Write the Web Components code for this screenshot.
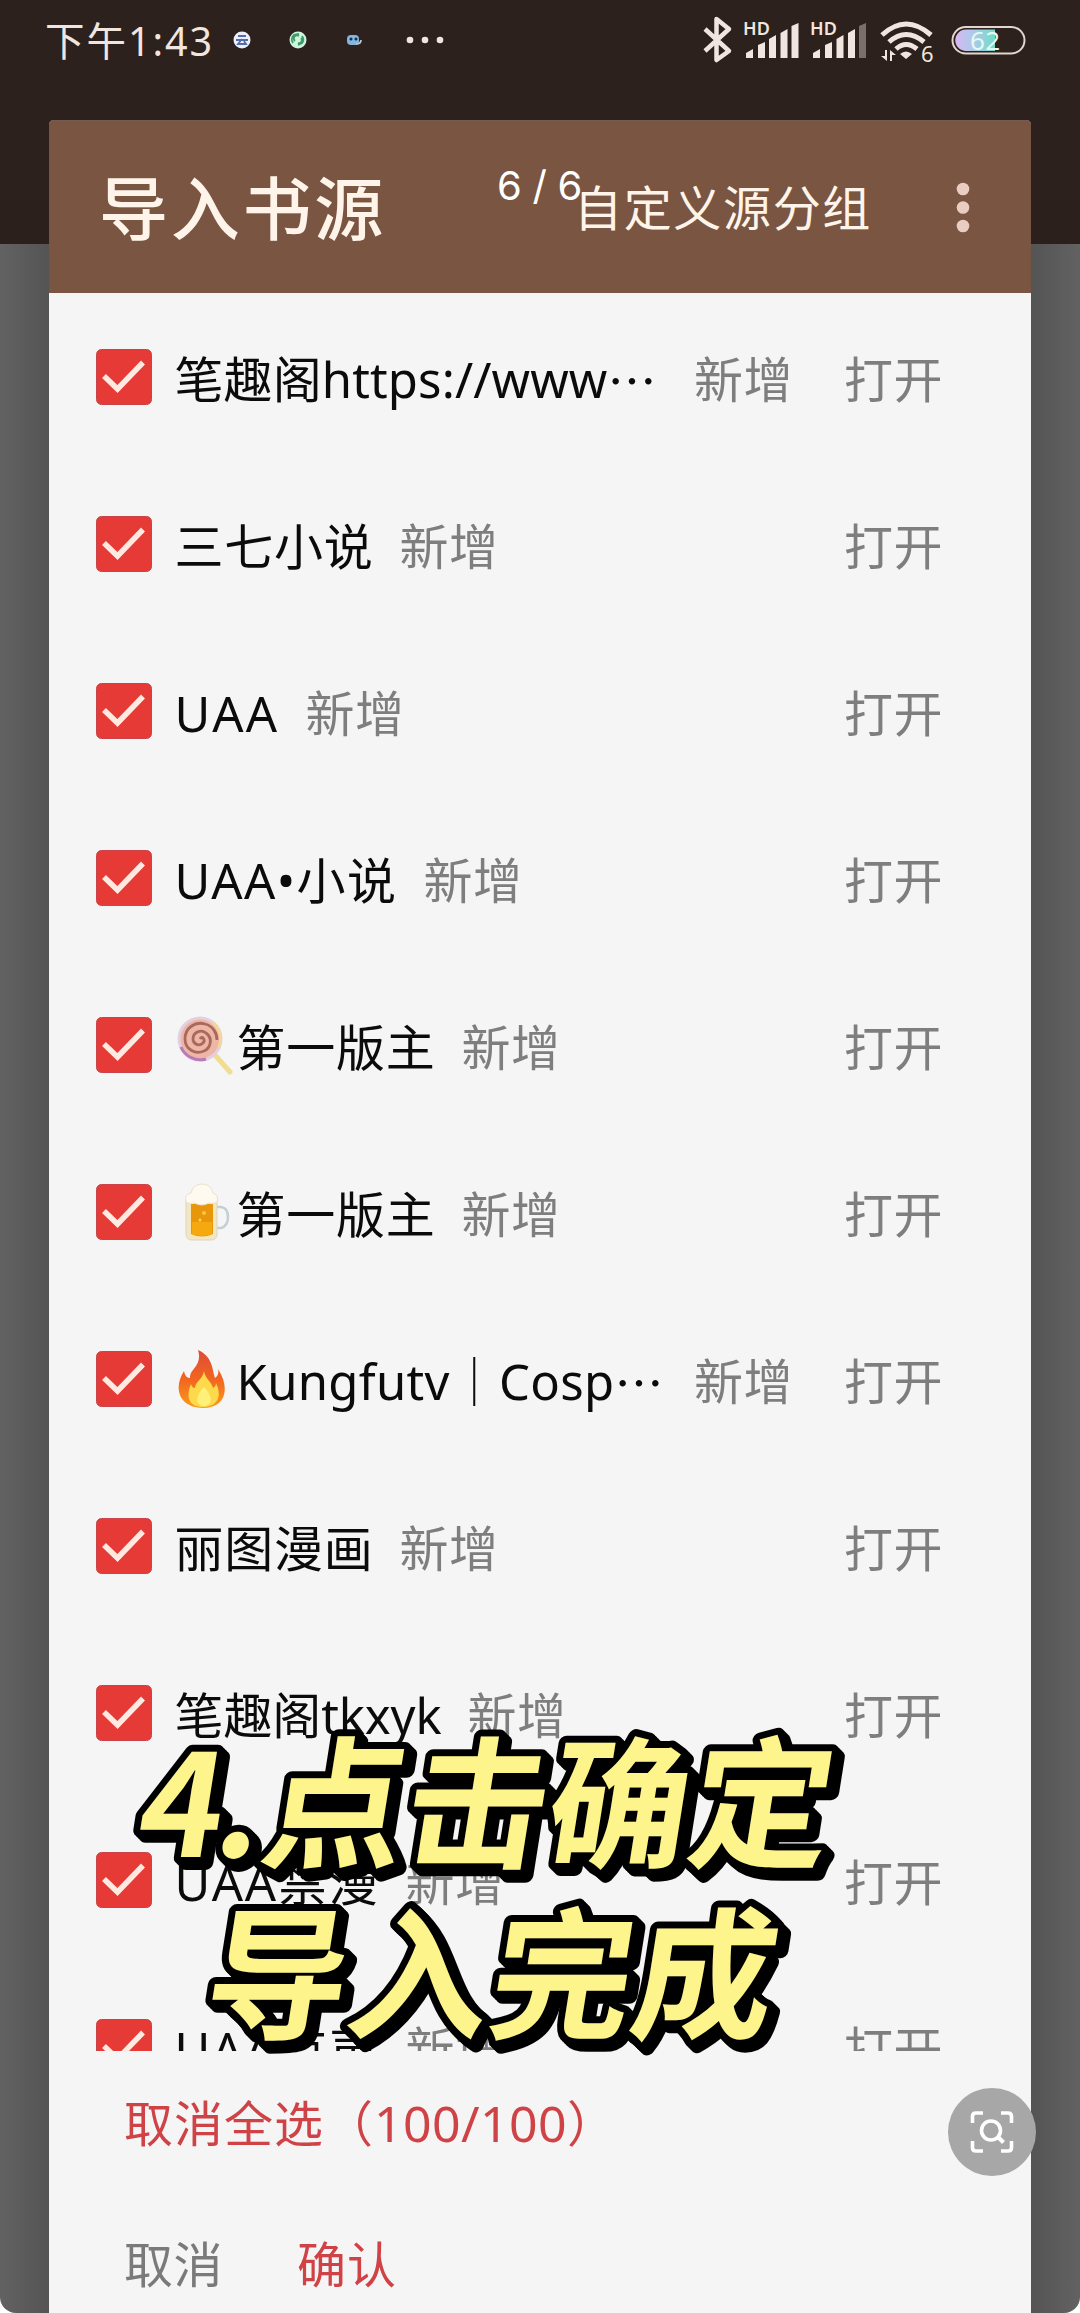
<!DOCTYPE html>
<html lang="zh-CN">
<head>
<meta charset="utf-8">
<title>导入书源</title>
<style>
html,body{margin:0;padding:0;background:#fff}
body{font-family:"Noto Sans","Noto Sans CJK SC",sans-serif}
</style>
</head>
<body>
<import-screen></import-screen>
<script>
const define=(name,html,setup)=>customElements.define(name,class extends HTMLElement{
  connectedCallback(){
    if(this.shadowRoot)return;
    this.attachShadow({mode:'open'}).innerHTML=typeof html==='function'?html(this):html;
    if(setup)setup(this);
  }
});

/* Text stretched to a given width through letter spacing. */
define('fit-text','<style>:host{display:inline-block;white-space:nowrap}span{display:inline-block;white-space:nowrap}</style><span><slot></slot></span>',el=>{
  const w=+el.getAttribute('w'),s=el.shadowRoot.querySelector('span');
  const n=[...el.textContent].length;
  s.style.letterSpacing=((w-s.getBoundingClientRect().width)/n)+'px';
  el.style.width=w+'px';
});

define('check-box',`<style>:host{display:block;width:56px;height:56px;flex:none}svg{display:block}</style>
<svg width="56" height="56" viewBox="0 0 56 56"><rect x=".5" y=".5" width="55" height="55" rx="5" fill="#e53a35" stroke="#c9444a"/><path d="M8 27 21.500 40 47 13.500" fill="none" stroke="#ffe9e0" stroke-width="5.500"/></svg>`);

const emoji={
lolly:`<svg width="56" height="60" viewBox="0 0 56 60"><path d="M38 40 53 57" stroke="#f1dc93" stroke-width="5" stroke-linecap="round"/><circle cx="23" cy="24" r="21" fill="#eeb7a5" stroke="#e4cfe0" stroke-width="3"/><path d="M4 32a21 21 0 0 0 25 12" fill="none" stroke="#b87bb8" stroke-width="3"/><path d="M35 7a21 21 0 0 1 7 25" fill="none" stroke="#f3d69a" stroke-width="3"/><path d="M23 24c2-4 6 1 3 4-4 4-10 1-10-4 0-7 8-10 13-6 7 5 5 15-2 18-9 4-19-2-19-12C8 13 18 6 28 9c8 2 12 9 12 16" fill="none" stroke="#a9695f" stroke-width="2.800"/></svg>`,
beer:`<svg width="56" height="60" viewBox="0 0 56 60"><path d="M38 25h6q7 1 7 10t-7 11h-6" fill="none" stroke="#c5ced2" stroke-width="2.500"/><path d="M9 16h31v36q0 6-6 6H15q-6 0-6-6z" fill="#f4e6bd" stroke="#d9d5c8"/><path d="M14 22h22v30q-11 5-22 0z" fill="#e8970d"/><path d="M15 40h20v12q-10 4-20 0z" fill="#f5a90e"/><circle cx="27" cy="31" r="2" fill="#ffc63b"/><circle cx="23" cy="38" r="1.500" fill="#ffd45c"/><path d="M9 20q-2-8 5-9 2-9 11-9 9 0 11 9 6 2 4 9-4 3-8 1-8 4-14 0-5 2-9-1z" fill="#fffaf0" stroke="#e9e2d2"/></svg>`,
fire:`<svg width="56" height="60" viewBox="0 0 56 60"><defs><linearGradient id="f" x2="0" y2="1"><stop offset="0" stop-color="#df4a38"/><stop offset=".5" stop-color="#f2651f"/><stop offset="1" stop-color="#fb9b1c"/></linearGradient></defs><path d="M21 1C36 8 35 20 38 29c3-2 4-5 3-9 13 20 7 39-15 39S-5 41 7 22c1 5 3 7 6 7-1-9 13-12 8-28z" fill="url(#f)"/><path d="M27 22c1 8 8 11 9 17 2-1 3-3 3-5 7 15 0 24-13 24S8 49 14 35c1 3 2 4 4 4 0-6 8-9 9-17z" fill="#fdd94c"/><path d="M27 38c8 8 10 18 0 19-10-1-8-11 0-19z" fill="#fff07a"/></svg>`
};

define('source-row',el=>{
  const e=el.getAttribute('emoji'),w=el.getAttribute('w'),dots=el.hasAttribute('cut');
  return `<style>
:host{display:flex;align-items:center;height:167px;flex:none;padding-left:46.500px;font-size:49px;line-height:60px;color:#0b0b0b}
check-box{margin-right:23px}
.main{display:flex;align-items:center;width:669.500px;height:60px;padding-top:4px}
.main svg{display:block;margin:-4px 4px 0 2px;flex:none}
.cut{font-family:"Noto Sans CJK SC",sans-serif;width:49px;font-size:49px}
.tag{margin-left:26px;color:#7e7e7e}
.tag.far{margin-left:auto;margin-right:51px}
.open{color:#7e7e7e;padding-top:4px}
</style><check-box></check-box><div class="main">${e?emoji[e]:''}<fit-text w="${w}">${el.getAttribute('name')}</fit-text>${dots?'<span class="cut">…</span>':''}<fit-text class="tag ${dots?'far':''}" w="99">新增</fit-text></div><fit-text class="open" w="99">打开</fit-text>`;
});

define('status-bar',`<style>
:host{display:flex;align-items:center;height:80px;color:#f1e6df;padding-left:45px;box-sizing:border-box}
svg{display:block;flex:none}
.time{font-size:39.500px;line-height:50px;margin-top:1px}
.apps{margin-left:19px}
.sys{margin-left:auto;margin-right:45px}
text{font-family:"Noto Sans",sans-serif}
</style>
<fit-text class="time" w="169">下午1:43</fit-text>
<svg class="apps" width="212" height="24" viewBox="233 28 212 24"><circle cx="242" cy="40" r="8.500" fill="#edf0fb"/><path d="M238 36h8m-10 4h12m-6-1-4 5h8l-2-3" stroke="#536caa" stroke-width="1.800" fill="none"/><circle cx="298" cy="40" r="8.500" fill="#cff5dc"/><path d="M293 43a6 6 0 0 1 1-8l5-1m3 2a6 6 0 0 1 0 7l-4 2M295 41a3 3 0 0 1 4-5m2 2a3 3 0 0 1-3 5" stroke="#3e9b6c" stroke-width="1.900" fill="none"/><rect x="347" y="35" width="12" height="10" rx="4" fill="#82b5e0"/><circle cx="351" cy="39" r="1.500" fill="#173047"/><circle cx="356" cy="39" r="1.500" fill="#173047"/><path d="M356 44q5 0 5-4" stroke="#bdc5cb" stroke-width="1.800" fill="none"/><g fill="#f1e6df"><circle cx="410" cy="40" r="3.300"/><circle cx="425" cy="40" r="3.300"/><circle cx="440" cy="40" r="3.300"/></g></svg>
<svg class="sys" width="335" height="64" viewBox="700 8 335 64"><defs><linearGradient id="b"><stop offset="0" stop-color="#d9b8f0"/><stop offset=".4" stop-color="#b0c8ec"/><stop offset="1" stop-color="#72dcc8"/></linearGradient></defs>
<path d="M705 29 729 51 716.500 60V19L729 29 705 51" fill="none" stroke="#f1e6df" stroke-width="4.500" stroke-linejoin="round"/>
<g fill="#f1e6df"><text x="743" y="35" font-size="18" font-weight="600" textLength="27">HD</text><text x="810" y="35" font-size="18" font-weight="600" textLength="27">HD</text>
<path d="M746 58v-5l7-4v9zM758 58V45l7-3v16zM769 58V39l7-4v23zM780.500 58V33l7-4v29zM791.500 58V26l7-3v35z"/><path d="M813 58v-5l7-4v9zM825 58V45l7-3v16zM836.500 58V39l7-4v23zM848 58V33l7-4v29z"/><path d="M859 58V26l7-3v35z" opacity=".4"/>
<path d="M906 59l-6-5q6-5 12 0zM885 50v6h-4l6 5V50zM890 61V50l6 5h-4v6z"/></g>
<g fill="none" stroke="#f1e6df" stroke-width="5"><path d="M882 35q24-22 49 0M889 42q17-15 35 0M896 49q10-9 21 0"/></g>
<text x="921" y="62" font-size="22" fill="#f1e6df">6</text>
<rect x="952.500" y="27" width="72" height="26.500" rx="13.200" fill="none" stroke="#e3d6d0" stroke-width="2"/><path d="M995 29.500v21.500H966a10.700 10.700 0 0 1 0-21.500z" fill="url(#b)"/><text x="970" y="50" font-size="26" fill="#e6f8f2" textLength="30">62</text></svg>`);

define('dialog-header',`<style>
:host{display:flex;align-items:center;height:173px;flex:none;box-sizing:border-box;padding:2px 61px 0 50px;background:#795542;color:#fff4ea;box-shadow:inset 0 2px 1px #76594e;border-radius:5px 5px 0 0}
.t{font-size:69px;line-height:84px;font-weight:500}
.g{font-size:48px;line-height:60px;margin-left:auto;margin-right:84px}
svg{display:block}
</style><fit-text class="t" w="287">导入书源</fit-text><fit-text class="g" w="298">自定义源分组</fit-text>
<svg width="14" height="54" viewBox="0 0 14 54" fill="#e9cdc2"><circle cx="7" cy="8" r="6.300"/><circle cx="7" cy="26.500" r="6.300"/><circle cx="7" cy="45" r="6.300"/></svg>`);

define('source-list',`<style>:host{display:flex;flex-direction:column;height:1758px;overflow:hidden;flex:none}</style>
<source-row name="笔趣阁https://www" w="433" cut></source-row>
<source-row name="三七小说" w="199"></source-row>
<source-row name="UAA" w="105"></source-row>
<source-row name="UAA•小说" w="223"></source-row>
<source-row name="第一版主" w="199" emoji="lolly"></source-row>
<source-row name="第一版主" w="199" emoji="beer"></source-row>
<source-row name="Kungfutv｜Cosp" w="378" emoji="fire" cut></source-row>
<source-row name="丽图漫画" w="199"></source-row>
<source-row name="笔趣阁tkxyk" w="267"></source-row>
<source-row name="UAA禁漫" w="205"></source-row>
<source-row name="UAA有声" w="205"></source-row>`);

define('dialog-footer',`<style>
:host{display:flex;flex-direction:column;flex:1;padding:42px 0 0 75px;font-size:49px;line-height:60px;color:#cf4347}
.all{display:flex}.b{display:flex;gap:74px;margin-top:81px}
.c{color:#7a7a7a}.n{font-size:50px}
</style><div class="all"><fit-text w="250">取消全选（</fit-text><fit-text class="n" w="193">100/100</fit-text><span>）</span></div>
<div class="b"><fit-text class="c" w="99">取消</fit-text><fit-text w="100">确认</fit-text></div>`);

define('import-dialog',`<style>:host{display:flex;flex-direction:column;width:982px;height:2193px;margin-left:49px;background:#f5f5f5;border-radius:5px 5px 0 0}</style>
<dialog-header></dialog-header><source-list></source-list><dialog-footer></dialog-footer>`);

define('page-counter',`<style>:host{position:absolute;left:497px;top:161px;font:40px/50px Inter,"Noto Sans",sans-serif;color:#fff}</style><fit-text w="85">6 / 6</fit-text>`);

define('video-caption',`<style>
:host{position:absolute;left:120px;top:1700px;width:760px;height:380px}
svg{display:block;overflow:visible;filter:drop-shadow(2px 2px 0 #000) drop-shadow(4px 4px 0 #000)}
text{font:700 142px "Noto Sans CJK SC",sans-serif;fill:#fdf58c;stroke:#000;stroke-width:14px;stroke-linejoin:round;paint-order:stroke fill}
</style><svg width="760" height="380" viewBox="120 1700 760 380"><text transform="translate(133 1857) skewX(-9)" textLength="124">4.</text><text transform="translate(257 1857) skewX(-9)" textLength="568">点击确定</text><text transform="translate(200 2028) skewX(-9)" textLength="568">导入完成</text></svg>`);

define('scan-button',`<style>:host{position:absolute;left:948px;top:2088px;width:88px;height:88px;border-radius:50%;background:#a7a7a7}svg{display:block}</style>
<svg width="88" height="88" viewBox="0 0 88 88" fill="none" stroke="#fff" stroke-width="3.600"><path d="M24.500 35v-6.500q0-3.500 3.500-3.500h7M53 25h7q3.500 0 3.500 3.500V35M63.500 53v6.500q0 3.500-3.500 3.500h-7M35 63h-7q-3.500 0-3.500-3.500V53"/><circle cx="43" cy="42.500" r="9.500"/><path d="m50 49 5.500 5.500" stroke-width="4"/></svg>`);

define('import-screen',`<style>
:host{display:flex;flex-direction:column;position:relative;width:1080px;height:2313px;overflow:hidden;border-radius:0 0 16px 16px;
background:linear-gradient(#2c211c,#2c201d) 0 0/1080px 244px no-repeat,linear-gradient(90deg,#626262,#545454 49px,#545454 1031px,#626262)}
status-bar{margin-bottom:40px;flex:none}
</style><status-bar></status-bar><import-dialog></import-dialog><page-counter></page-counter><video-caption></video-caption><scan-button></scan-button>`);
</script>
</body>
</html>
